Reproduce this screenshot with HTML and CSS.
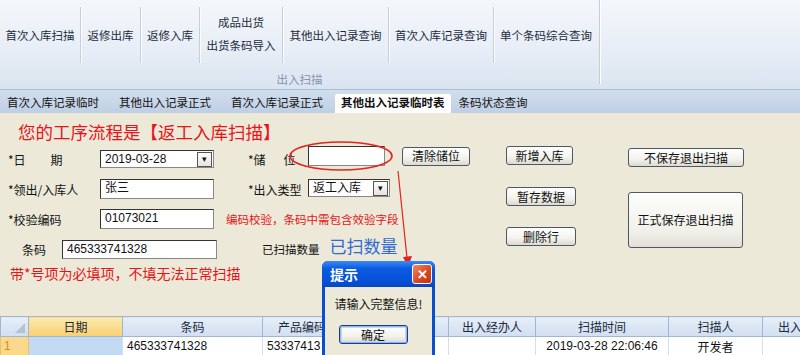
FILE: index.html
```html
<!DOCTYPE html>
<html lang="zh-CN">
<head>
  <meta charset="UTF-8">
  <title>出入扫描 - 其他出入记录临时表</title>
  <link rel="stylesheet" href="styles.css">
</head>
<body>
  <div class="ribbon">
    <div class="group">
      <div class="group-btns">
        <div class="rb" style="width:80px">首次入库扫描</div>
        <div class="rb" style="width:59px">返修出库</div>
        <div class="rb" style="width:58px">返修入库</div>
        <div class="rb two" style="width:82px"><span>成品出货</span><span>出货条码导入</span></div>
        <div class="rb" style="width:105px">其他出入记录查询</div>
        <div class="rb" style="width:104px">首次入库记录查询</div>
        <div class="rb last" style="width:104px">单个条码综合查询</div>
      </div>
      <div class="group-label">出入扫描</div>
    </div>
  </div>

  <div class="tabs">
    <span class="tab first">首次入库记录临时</span>
    <span class="tab">其他出入记录正式</span>
    <span class="tab">首次入库记录正式</span>
    <span class="tab active">其他出入记录临时表</span>
    <span class="tab">条码状态查询</span>
  </div>

  <div class="page">
    <div class="flow-title">您的工序流程是【返工入库扫描】</div>

    <div class="main">
      <div class="fields">
        <div class="row">
          <span class="lbl">*日<span class="gap"></span>期</span>
          <div class="combo date"><span class="val">2019-03-28</span><span class="drop">&#9662;</span></div>
          <span class="lbl lbl2">*储<span class="gap"></span>位</span>
          <div class="box store"></div>
          <button class="btn clear">清除储位</button>
        </div>
        <div class="row">
          <span class="lbl">*领出/入库人</span>
          <div class="box wide">张三</div>
          <span class="lbl lbl2">*出入类型</span>
          <div class="combo kind"><span class="val">返工入库</span><span class="drop">&#9662;</span></div>
        </div>
        <div class="row">
          <span class="lbl">*校验编码</span>
          <div class="box wide">01073021</div>
          <span class="hint">编码校验，条码中需包含效验字段</span>
        </div>
        <div class="row">
          <span class="lbl short">条码</span>
          <div class="box barcode">465333741328</div>
          <span class="count-lbl">已扫描数量</span>
          <span class="count">已扫数量</span>
        </div>
      </div>

      <div class="col-btns">
        <button class="btn add">新增入库</button>
        <button class="btn hold">暂存数据</button>
        <button class="btn del">删除行</button>
      </div>

      <div class="col-exit">
        <button class="btn quit">不保存退出扫描</button>
        <button class="btn save">正式保存退出扫描</button>
      </div>
    </div>

    <div class="note">带*号项为必填项，不填无法正常扫描</div>
  </div>

  <table class="grid">
    <colgroup>
      <col style="width:28px"><col style="width:94px"><col style="width:140px">
      <col style="width:78px"><col style="width:108px"><col style="width:87px">
      <col style="width:133px"><col style="width:94px"><col style="width:100px">
    </colgroup>
    <thead>
      <tr>
        <th class="corner"><span class="tri"></span></th>
        <th class="hot">日期</th>
        <th>条码</th>
        <th class="left">产品编码</th>
        <th></th>
        <th>出入经办人</th>
        <th>扫描时间</th>
        <th>扫描人</th>
        <th class="left">出入</th>
      </tr>
    </thead>
    <tbody>
      <tr>
        <td class="rowno">1</td>
        <td class="sel"></td>
        <td>465333741328</td>
        <td>53337413</td>
        <td></td>
        <td></td>
        <td class="mid">2019-03-28 22:06:46</td>
        <td class="mid">开发者</td>
        <td></td>
      </tr>
    </tbody>
  </table>

  <svg class="marks" width="800" height="355" viewBox="0 0 800 355">
    <ellipse cx="341" cy="156" rx="51" ry="14" fill="none" stroke="#e3231f" stroke-width="1.6"/>
    <line x1="398" y1="171" x2="407" y2="258" stroke="#e3231f" stroke-width="1.2"/>
    <polygon points="403,257 412,256 408,267" fill="#e3231f"/>
  </svg>

  <div class="dialog">
    <div class="dlg-title">
      <span>提示</span>
      <span class="dlg-close">&#10005;</span>
    </div>
    <div class="dlg-body">
      <div class="dlg-msg">请输入完整信息!</div>
      <button class="btn ok">确定</button>
    </div>
  </div>
</body>
</html>
```

FILE: styles.css
```css
body {
  margin: 0;
  width: 800px;
  height: 355px;
  overflow: hidden;
  position: relative;
  font-family: "Liberation Sans", "Noto Sans CJK SC", sans-serif;
  font-size: 12px;
  color: #111;
  background: #ece9d8;
}

/* ribbon */
.ribbon {
  height: 90px;
  background: linear-gradient(#f4f7fb, #e8eef7 55%, #dae4f0);
  border-bottom: 1px solid #a9bdd5;
  box-sizing: border-box;
}

.group {
  width: 599px;
  height: 84px;
  border-right: 1px solid #c3cedb;
  box-shadow: 1px 0 0 #fff;
}

.group-btns {
  display: flex;
  height: 70px;
}

.rb {
  margin-top: 7px;
  height: 56px;
  border-right: 1px solid #c6cfda;
  box-shadow: 1px 0 0 #fafcff;
  display: flex;
  align-items: center;
  justify-content: center;
  font-size: 11.5px;
  color: #1c2a3c;
  white-space: nowrap;
}

.rb.two {
  flex-direction: column;
  line-height: 23px;
}

.rb.last {
  border-right: none;
  box-shadow: none;
}

.group-label {
  text-align: center;
  line-height: 20px;
  height: 14px;
  font-size: 11.5px;
  color: #8595ab;
}

/* tabs */
.tabs {
  height: 23px;
  background: linear-gradient(#d2deed, #bfcfe4);
  display: flex;
  align-items: flex-end;
}

.tab {
  padding: 0 10px;
  height: 19px;
  line-height: 19px;
  font-size: 11.5px;
  white-space: nowrap;
  color: #111;
}

.tab.first {
  padding-left: 7px;
}

.tab.active {
  padding: 0 6px;
  margin-left: 2px;
  background: #fff;
  font-weight: bold;
  border-radius: 2px 2px 0 0;
}

.tab.active + .tab {
  padding-left: 8px;
}

/* form */
.page {
  height: 203px;
  padding-left: 8px;
}

.flow-title {
  height: 25px;
  padding-top: 6px;
  padding-left: 10px;
  line-height: 25px;
  font-size: 17.5px;
  color: #e8141a;
  font-family: "Noto Sans CJK SC", sans-serif;
}

.main {
  display: flex;
  height: 120px;
}

.fields {
  width: 498px;
}

.row {
  display: flex;
  align-items: center;
  height: 30px;
  white-space: nowrap;
}

.lbl {
  width: 92px;
  font-family: "Noto Sans CJK SC", sans-serif;
}

.lbl .gap {
  display: inline-block;
  width: 25px;
}

.lbl2 {
  width: 60px;
  margin-left: 34px;
}

.lbl2 .gap {
  width: 18px;
}

.lbl.short {
  width: 40px;
  padding-left: 14px;
}

.box,
.combo {
  box-sizing: border-box;
  background: #fff;
  border: 1px solid #333;
  border-right-color: #888;
  border-bottom-color: #888;
  padding-left: 4px;
  line-height: 17px;
  font-size: 12px;
}

.combo {
  display: flex;
  justify-content: space-between;
  align-items: center;
  padding-right: 1px;
}

.drop {
  width: 15px;
  height: 15px;
  box-sizing: border-box;
  border: 1px solid #555;
  background: linear-gradient(#fdfdfd, #e6e4dc);
  font-size: 9px;
  line-height: 13px;
  text-align: center;
}

.date {
  width: 114px;
  height: 18px;
}

.store {
  width: 77px;
  height: 20px;
  margin-top: -6px;
}

.wide {
  width: 114px;
  height: 20px;
}

.kind {
  width: 82px;
  height: 18px;
  margin-top: -2px;
}

.barcode {
  width: 155px;
  height: 19px;
}

.hint {
  margin-left: 12px;
  color: #e8141a;
  font-size: 11.5px;
  font-family: "Noto Sans CJK SC", sans-serif;
}

.count-lbl {
  margin-left: 45px;
  font-size: 11.5px;
  font-family: "Noto Sans CJK SC", sans-serif;
}

.count {
  margin-left: 10px;
  margin-top: -7px;
  font-size: 17px;
  color: #2e6ad6;
  font-family: "Noto Sans CJK SC", sans-serif;
}

.btn {
  box-sizing: border-box;
  height: 19px;
  padding: 0;
  border: 1px solid #4d5866;
  border-radius: 3px;
  background: linear-gradient(#ffffff, #f3f2ec 60%, #dcdad0);
  font-family: "Noto Sans CJK SC", sans-serif;
  font-size: 12px;
  line-height: 16px;
  color: #111;
}

.clear {
  width: 68px;
  margin-left: 17px;
  margin-top: -6px;
}

.col-btns {
  width: 122px;
  display: flex;
  flex-direction: column;
  align-items: flex-start;
  padding-top: 2px;
}

.add {
  width: 67px;
}

.hold {
  width: 70px;
  margin-top: 22px;
}

.del {
  width: 70px;
  margin-top: 21px;
}

.col-exit {
  display: flex;
  flex-direction: column;
  padding-top: 4px;
}

.quit {
  width: 116px;
}

.save {
  width: 115px;
  height: 56px;
  margin-top: 25px;
  background: linear-gradient(#fdfdfb, #f1f0ea 70%, #e2e0d6);
}

.note {
  height: 18px;
  line-height: 18px;
  padding-left: 2px;
  font-size: 14px;
  color: #e8141a;
  font-family: "Noto Sans CJK SC", sans-serif;
}

/* data grid */
.grid {
  table-layout: fixed;
  width: 862px;
  border-collapse: collapse;
  border-top: 1px solid #8ea6c2;
  background: #fff;
}

.grid th {
  height: 19px;
  padding: 0;
  font-weight: normal;
  font-size: 12px;
  color: #1b2a3e;
  border: 1px solid #a2b6cd;
  background: linear-gradient(#e6eef8, #d1dff0);
  font-family: "Noto Sans CJK SC", sans-serif;
  white-space: nowrap;
  overflow: hidden;
}

.grid th.left {
  text-align: left;
  padding-left: 15px;
}

.grid th.hot {
  background: linear-gradient(#fce9ad, #f8d173);
}

.grid th.corner {
  position: relative;
}

.tri {
  position: absolute;
  right: 3px;
  bottom: 3px;
  width: 0;
  height: 0;
  border-left: 10px solid transparent;
  border-bottom: 10px solid #b4c3d4;
}

.grid td {
  height: 18px;
  padding: 0 4px;
  border: 1px solid #d5dfea;
  font-size: 12px;
  white-space: nowrap;
  overflow: hidden;
}

.grid td.rowno {
  background: #f9d98b;
  color: #e08a10;
  padding-left: 3px;
  border-color: #e8c070;
}

.grid td.sel {
  background: #c3daf4;
}

.grid td.mid {
  text-align: center;
}

/* annotations */
.marks {
  position: absolute;
  left: 0;
  top: 0;
  pointer-events: none;
}

/* message box */
.dialog {
  position: absolute;
  left: 322px;
  top: 261px;
  width: 113px;
  height: 100px;
  box-sizing: border-box;
  background: #0a4fd0;
  border-radius: 6px 6px 0 0;
  padding: 0 3px;
}

.dlg-title {
  height: 26px;
  margin: 0 -3px;
  padding: 0 3px 0 8px;
  border-radius: 6px 6px 0 0;
  background: linear-gradient(#3b8af4, #0a5ae0 30%, #0550d6 80%, #0747bf);
  display: flex;
  align-items: center;
  justify-content: space-between;
  color: #fff;
  font-weight: bold;
  font-size: 14px;
  font-family: "Noto Sans CJK SC", sans-serif;
}

.dlg-close {
  width: 20px;
  height: 20px;
  box-sizing: border-box;
  border: 1px solid #fff;
  border-radius: 3px;
  background: linear-gradient(135deg, #f08a68, #d8431c 60%, #c23410);
  font-size: 13px;
  line-height: 18px;
  text-align: center;
}

.dlg-body {
  height: 74px;
  background: #ece9d8;
  text-align: center;
  font-family: "Noto Sans CJK SC", sans-serif;
}

.dlg-msg {
  padding-top: 8px;
  height: 22px;
  line-height: 18px;
  font-size: 12px;
}

.ok {
  width: 69px;
  margin-top: 8px;
  margin-left: -11px;
  border-color: #1c3f86;
  box-shadow: inset 0 0 0 1px #8fb4ee, inset 0 0 0 2px #c6d8f6;
}
```
